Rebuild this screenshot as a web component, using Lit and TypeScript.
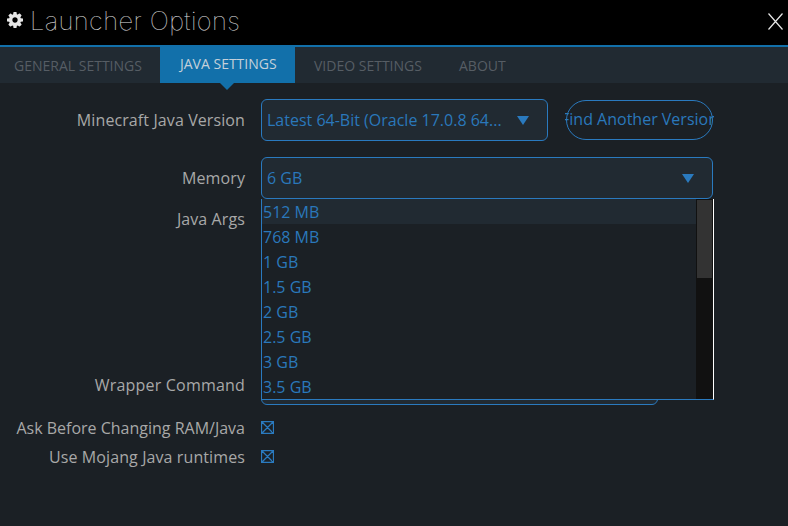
import { LitElement, html, css } from "lit";
import { customElement } from "lit/decorators.js";

const SIZES = ["512 MB", "768 MB", "1 GB", "1.5 GB", "2 GB", "2.5 GB", "3 GB", "3.5 GB"];

@customElement("app-root")
export class AppRoot extends LitElement {
  static styles = css`
    :host {
      display: block;
      width: 788px;
      height: 526px;
      overflow: hidden;
      background: #1b2025;
      font-family: "Open Sans", "Noto Sans", sans-serif;
      font-size: 16px;
      color: #a8a8a8;
    }
    .header {
      height: 45px;
      background: #000;
      border-bottom: 2px solid #1270aa;
      display: flex;
      align-items: center;
      padding: 0 5px 0 7px;
    }
    .gear { width: 16px; height: 16px; fill: #e6e6e6; flex: none; margin-bottom: 5px; }
    .title {
      font-family: "Inter", "Open Sans", sans-serif;
      font-size: 25.5px;
      letter-spacing: 0.4px;
      font-weight: 100;
      color: #e0e0e0;
      margin-left: 7px;
      padding-bottom: 5px;
      flex: 1;
    }
    .close { width: 15px; height: 17px; stroke: #e6e6e6; stroke-width: 1.2; fill: none; margin-bottom: 3px; }
    .tabs {
      height: 36px;
      background: #212a32;
      display: flex;
      font-size: 14px;
      color: #565d64;
    }
    .tab { line-height: 38px; white-space: nowrap; }
    .tab.g { padding-left: 14px; box-sizing: border-box; width: 160px; }
    .tab.active {
      position: relative;
      background: #1270aa;
      color: #c4d0da;
      width: 135px;
      box-sizing: border-box;
      padding: 0 0 0 20px;
      line-height: 34px;
    }
    .tab.active::after {
      content: "";
      position: absolute;
      left: 60px;
      top: 36px;
      border-left: 7px solid transparent;
      border-right: 7px solid transparent;
      border-top: 7px solid #1270aa;
    }
    .tab.v { padding: 0 0 0 19px; width: 164px; box-sizing: border-box; }
    .form {
      display: grid;
      grid-template-columns: 245px 452px;
      column-gap: 16px;
      row-gap: 16px;
      padding-top: 16px;
      grid-template-rows: 42px 42px 132px 42px;
    }
    .label { text-align: right; line-height: 42px; white-space: nowrap; letter-spacing: 0.1px; }
    .label.top { line-height: 8px; }
    .label.wrap { line-height: 44px; letter-spacing: 0.2px; }
    .control { display: flex; gap: 18px; min-width: 0; }
    .select {
      box-sizing: border-box;
      height: 42px;
      background: #212a32;
      border: 1px solid #2a7abf;
      border-radius: 6px;
      color: #2a78bb;
      display: flex;
      align-items: center;
      padding: 0 18px 0 5px;
      flex: 1;
      min-width: 0;
    }
    .select .v { flex: 1; white-space: nowrap; overflow: hidden; }
    .arrow { border-left: 6px solid transparent; border-right: 6px solid transparent; border-top: 9px solid #2a7abf; flex: none; }
    .version { flex: 0 0 287px; }
    .find {
      box-sizing: border-box;
      width: 147px;
      height: 40px;
      margin-top: 1px;
      border: 1px solid #2a7abf;
      border-radius: 20px;
      color: #2a78bb;
      display: flex;
    }
    .find-clip {
      flex: 1;
      margin: 0 -2px;
      min-width: 0;
      display: flex;
      justify-content: center;
      align-items: center;
      white-space: nowrap;
      overflow: hidden;
      padding-bottom: 3px;
    }
    .memory { position: relative; }
    .memory .select { width: 100%; }
    .list {
      position: absolute;
      z-index: 2;
      left: 0;
      top: 42px;
      width: 453px;
      height: 201px;
      box-sizing: border-box;
      display: flex;
      background: #1b2025;
      border-left: 1px solid #2a7abf;
      border-bottom: 1px solid #2a7abf;
      border-right: 1px solid #fff;
    }
    .items { flex: 1; color: #2a78bb; }
    .item { height: 25px; line-height: 27px; padding-left: 1px; }
    .item.hover { background: #212a32; }
    .bar { width: 17px; background: #111; padding: 1px 1px 0; box-sizing: border-box; }
    .thumb { height: 78px; background: #333; }
    .area {
      box-sizing: border-box;
      background: #212a32;
      border: 1px solid #2a7abf;
      border-radius: 6px;
      width: 397px;
    }
    .check-rows { display: grid; grid-template-columns: 245px auto; column-gap: 16px; margin-top: 9px; grid-auto-rows: 29px; }
    .cb { width: 13px; height: 13px; stroke: #2a7abf; stroke-width: 1.3; fill: none; margin-top: 7px; display: block; }
    .check-rows .label { line-height: 29px; }
    .check-rows .label.ask { letter-spacing: 0; }
  `;

  render() {
    return html`
      <div class="header">
        <svg class="gear" viewBox="0 0 1536 1536"><path d="M1024 768q0-106-75-181t-181-75-181 75-75 181 75 181 181 75 181-75 75-181zm512-109v222q0 12-8 23t-20 13l-185 28q-19 54-39 91 35 50 107 138 10 12 10 25t-9 23q-27 37-99 108t-94 71q-12 0-26-9l-138-108q-44 23-91 38-16 136-29 186-7 28-36 28h-222q-14 0-24.500-8.500t-11.500-21.500l-28-184q-49-16-90-37l-141 107q-10 9-25 9-14 0-25-11-126-114-165-168-7-10-7-23 0-12 8-23 15-21 51-66.500t54-70.500q-27-50-41-99l-183-27q-13-2-21-12.500t-8-23.500v-222q0-12 8-23t19-13l186-28q14-46 39-92-40-57-107-138-10-12-10-24 0-10 9-23 26-36 98.500-107.500t94.500-71.500q13 0 26 10l138 107q44-23 91-38 16-136 29-186 7-28 36-28h222q14 0 24.500 8.500t11.500 21.500l28 184q49 16 90 37l142-107q9-9 24-9 13 0 25 10 129 119 165 170 7 8 7 22 0 12-8 23-15 21-51 66.500t-54 70.500q26 50 41 98l183 28q13 2 21 12.500t8 23.500z"/></svg>
        <div class="title">Launcher Options</div>
        <svg class="close" viewBox="0 0 15 17"><path d="M.5.5 14.500 16.500M14.500.5.500 16.500"/></svg>
      </div>
      <div class="tabs">
        <div class="tab g">GENERAL SETTINGS</div>
        <div class="tab active">JAVA SETTINGS</div>
        <div class="tab v">VIDEO SETTINGS</div>
        <div class="tab">ABOUT</div>
      </div>
      <div class="form">
        <div class="label">Minecraft Java Version</div>
        <div class="control">
          <div class="select version"><span class="v">Latest 64-Bit (Oracle 17.0.8 64...</span><span class="arrow"></span></div>
          <div class="find"><div class="find-clip">Find Another Version</div></div>
        </div>
        <div class="label">Memory</div>
        <div class="control memory">
          <div class="select"><span class="v">6 GB</span><span class="arrow"></span></div>
          <div class="list">
            <div class="items">
              ${SIZES.map((s, i) => html`<div class="item ${i === 0 ? "hover" : ""}">${s}</div>`)}
            </div>
            <div class="bar"><div class="thumb"></div></div>
          </div>
        </div>
        <div class="label top">Java Args</div>
        <div class="area"></div>
        <div class="label wrap">Wrapper Command</div>
        <div class="area"></div>
      </div>
      <div class="check-rows">
        <div class="label ask">Ask Before Changing RAM/Java</div>
        <svg class="cb" viewBox="0 0 13 13"><path d="M.5.5h12v12H.5zM.5.5l12 12M12.500.5l-12 12"/></svg>
        <div class="label">Use Mojang Java runtimes</div>
        <svg class="cb" viewBox="0 0 13 13"><path d="M.5.5h12v12H.5zM.5.5l12 12M12.500.5l-12 12"/></svg>
      </div>
    `;
  }
}
